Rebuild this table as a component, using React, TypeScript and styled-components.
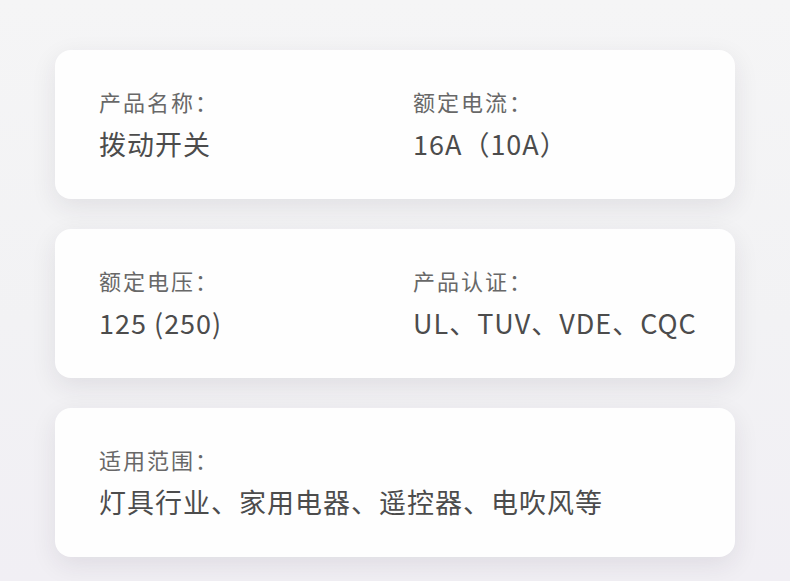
import React from "react";
import styled, { createGlobalStyle } from "styled-components";

const GlobalStyle = createGlobalStyle`
  html, body {
    margin: 0;
    padding: 0;
  }
  body {
    font-family: "Noto Sans CJK SC", "Noto Sans", sans-serif;
    background: #f4f4f5;
  }
`;

export const Page = styled.div`
  width: 790px;
  height: 581px;
  box-sizing: border-box;
  padding: 50px 55px 0;
  display: flex;
  flex-direction: column;
  gap: 30px;
  background: linear-gradient(180deg, #f5f5f6 0%, #f2f2f4 55%, #f1eff4 100%);
  overflow: hidden;
`;

export const Card = styled.div`
  height: 149px;
  box-sizing: border-box;
  padding: 36px 44px 0;
  background: #fefefe;
  border-radius: 16px;
  box-shadow: 0 8px 26px rgba(40, 30, 60, 0.09);
  display: grid;
  grid-template-columns: ${(p: { $cols?: string }) => p.$cols || "314px 1fr"};
  align-content: start;
`;

export const Field = styled.div`
  display: flex;
  flex-direction: column;
`;

export const Label = styled.div`
  font-size: 22px;
  line-height: 30px;
  letter-spacing: 2px;
  color: #686868;
`;

export const Value = styled.div`
  margin-top: 10px;
  font-size: 27px;
  line-height: 36px;
  letter-spacing: 1px;
  color: #4c4c4c;
  white-space: nowrap;
`;

interface IItem {
  label: string;
  value: string;
}

const rows: IItem[][] = [
  [
    { label: "产品名称：", value: "拨动开关" },
    { label: "额定电流：", value: "16A（10A）" },
  ],
  [
    { label: "额定电压：", value: "125 (250)" },
    { label: "产品认证：", value: "UL、TUV、VDE、CQC" },
  ],
  [{ label: "适用范围：", value: "灯具行业、家用电器、遥控器、电吹风等" }],
];

const App: React.FC = () => {
  return (
    <>
      <GlobalStyle />
      <Page>
        {rows.map((row, i) => (
          <Card key={i} $cols={row.length === 1 ? "1fr" : undefined}>
            {row.map((item) => (
              <Field key={item.label}>
                <Label>{item.label}</Label>
                <Value>{item.value}</Value>
              </Field>
            ))}
          </Card>
        ))}
      </Page>
    </>
  );
};

export default App;
